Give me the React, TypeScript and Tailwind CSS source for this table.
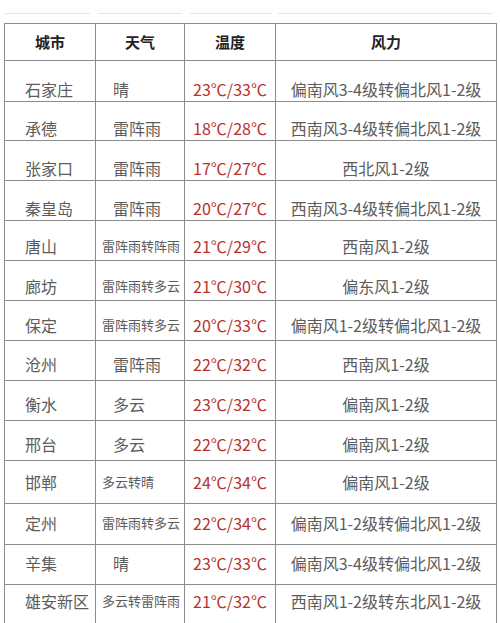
const rows = [
  { city: "石家庄", wx: "晴", small: false, t: "23℃/33℃", wind: "偏南风3-4级转偏北风1-2级", h: "h-[40px]", pad: "pt-[16px]" },
  { city: "承德", wx: "雷阵雨", small: false, t: "18℃/28℃", wind: "西南风3-4级转偏北风1-2级", h: "h-[40px]", pad: "pt-[14px]" },
  { city: "张家口", wx: "雷阵雨", small: false, t: "17℃/27℃", wind: "西北风1-2级", h: "h-[40px]", pad: "pt-[14px]" },
  { city: "秦皇岛", wx: "雷阵雨", small: false, t: "20℃/27℃", wind: "西南风3-4级转偏北风1-2级", h: "h-[40px]", pad: "pt-[14px]" },
  { city: "唐山", wx: "雷阵雨转阵雨", small: true, t: "21℃/29℃", wind: "西南风1-2级", h: "h-[40px]", pad: "pt-[10px]" },
  { city: "廊坊", wx: "雷阵雨转多云", small: true, t: "21℃/30℃", wind: "偏东风1-2级", h: "h-[40px]", pad: "pt-[10px]" },
  { city: "保定", wx: "雷阵雨转多云", small: true, t: "20℃/33℃", wind: "偏南风1-2级转偏北风1-2级", h: "h-[40px]", pad: "pt-[8px]" },
  { city: "沧州", wx: "雷阵雨", small: false, t: "22℃/32℃", wind: "西南风1-2级", h: "h-[40px]", pad: "pt-[6px]" },
  { city: "衡水", wx: "多云", small: false, t: "23℃/32℃", wind: "偏南风1-2级", h: "h-[40px]", pad: "pt-[6px]" },
  { city: "邢台", wx: "多云", small: false, t: "22℃/32℃", wind: "偏南风1-2级", h: "h-[40px]", pad: "pt-[6px]" },
  { city: "邯郸", wx: "多云转晴", small: true, t: "24℃/34℃", wind: "偏南风1-2级", h: "h-[43px]", pad: "" },
  { city: "定州", wx: "雷阵雨转多云", small: true, t: "22℃/34℃", wind: "偏南风1-2级转偏北风1-2级", h: "h-[41px]", pad: "pb-[2px]" },
  { city: "辛集", wx: "晴", small: false, t: "23℃/33℃", wind: "偏南风3-4级转偏北风1-2级", h: "h-[40px]", pad: "pb-[4px]" },
  { city: "雄安新区", wx: "多云转雷阵雨", small: true, t: "21℃/32℃", wind: "西南风1-2级转东北风1-2级", h: "h-[40px]", pad: "pb-[8px]" },
];

const font = "font-['Noto_Sans_CJK_SC',sans-serif]";
const cell = "flex items-center border-r border-b border-[#8c8c8c]";

export default function App() {
  return (
    <div className={`w-[500px] bg-white ${font}`}>
      <div className="flex pt-[13px]">
        <div className="ml-[5px] h-px w-[85px] bg-[#e6e6e6]" />
        <div className="ml-[8px] h-px w-[84px] bg-[#e6e6e6]" />
        <div className="ml-[8px] h-px w-[82px] bg-[#e6e6e6]" />
        <div className="ml-[6px] h-px w-[215px] bg-[#e6e6e6]" />
      </div>

      <div className="ml-[4px] mt-[9px] w-[493px] border-l border-t border-[#8c8c8c]">
        <div className="grid h-[37px] grid-cols-[91px_89px_91px_221px] text-[15px] font-semibold text-[#222]">
          <div className={`${cell} justify-center`}>城市</div>
          <div className={`${cell} justify-center`}>天气</div>
          <div className={`${cell} justify-center`}>温度</div>
          <div className={`${cell} justify-center`}>风力</div>
        </div>

        {rows.map((r) => (
          <div key={r.city} className={`grid grid-cols-[91px_89px_91px_221px] text-[#5c5c5c] ${r.h}`}>
            <div className={`${cell} pl-[20px] text-[16px] ${r.pad}`}>{r.city}</div>
            <div
              className={`${cell} ${r.pad} ${
                r.small ? "pl-[6px] text-[13px]" : "pl-[17px] text-[16px]"
              }`}
            >
              {r.wx}
            </div>
            <div className={`${cell} justify-center text-[16px] text-[#b8322c] ${r.pad}`}>{r.t}</div>
            <div className={`${cell} justify-center text-[16px] ${r.pad}`}>{r.wind}</div>
          </div>
        ))}
      </div>
    </div>
  );
}
